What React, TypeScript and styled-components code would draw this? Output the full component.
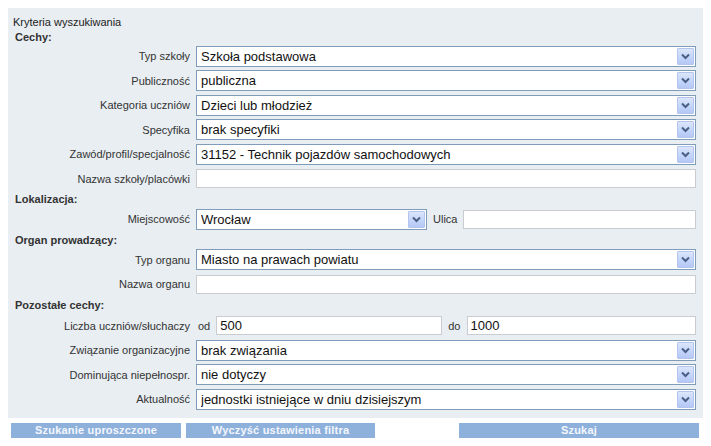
import React from 'react';
import styled, { createGlobalStyle } from 'styled-components';

const GlobalStyle = createGlobalStyle`
  html, body {
    margin: 0;
    padding: 0;
    background: #fff;
  }
  body {
    font-family: 'Liberation Sans', Arial, sans-serif;
    font-size: 11px;
    color: #222;
  }
`;

const Page = styled.div`
  padding: 8px 8px 0 8px;
  width: 695px;
`;

const Panel = styled.div`
  background: #e8eef2;
  padding: 6px 7px 6px 0;
`;

const Title = styled.div`
  padding-left: 5px;
  height: 16px;
  line-height: 16px;
`;

const Heading = styled.div<{ $h?: number }>`
  padding-left: 7px;
  height: ${p => p.$h ?? 16}px;
  line-height: ${p => p.$h ?? 16}px;
  font-weight: bold;
  color: #333;
`;

const Row = styled.div`
  display: grid;
  grid-template-columns: 182px 1fr;
  column-gap: 6px;
  align-items: center;
  height: 24.5px;
`;

const Label = styled.div`
  text-align: right;
  color: #333;
  white-space: nowrap;
`;

const Controls = styled.div`
  display: flex;
  align-items: center;
  gap: 6px;
  min-width: 0;
`;

const SelectBox = styled.div<{ $width?: number }>`
  display: flex;
  align-items: center;
  box-sizing: border-box;
  height: 21px;
  ${p => (p.$width ? `width: ${p.$width}px; flex: none;` : 'flex: 1;')}
  background: #fff;
  border: 1px solid #7f9db9;
  padding: 0 1px 0 4px;
  font-size: 13px;
  color: #111;
`;

const SelectText = styled.span`
  flex: 1;
  white-space: nowrap;
  overflow: hidden;
`;

const ArrowButton = styled.span`
  display: flex;
  align-items: center;
  justify-content: center;
  box-sizing: border-box;
  width: 17px;
  height: 17px;
  background: linear-gradient(180deg, #dce6fb 0%, #c4d5fa 55%, #b5c8f5 100%);
  border: 1px solid #b3c5ef;
  border-radius: 1px;
`;

const TextInput = styled.input<{ $width?: number }>`
  box-sizing: border-box;
  height: 19px;
  ${p => (p.$width ? `width: ${p.$width}px; flex: none;` : 'flex: 1; min-width: 0;')}
  border: 1px solid #c9cdd1;
  background: #fff;
  padding: 0 3px;
  font-family: 'Liberation Sans', Arial, sans-serif;
  font-size: 13px;
  color: #111;
  outline: none;
`;

const InlineLabel = styled.span`
  color: #333;
  white-space: nowrap;
`;

const ButtonBar = styled.div`
  display: flex;
  margin-top: 5px;
  padding-left: 3px;
`;

const Button = styled.button<{ $width: number; $gap?: number }>`
  width: ${p => p.$width}px;
  margin-left: ${p => p.$gap ?? 0}px;
  height: 15px;
  padding: 0;
  border: none;
  background: #8eb1dc;
  color: #f4f7fc;
  font-family: 'Liberation Sans', Arial, sans-serif;
  font-weight: bold;
  font-size: 11px;
  line-height: 15px;
  letter-spacing: 0.2px;
  cursor: pointer;
`;

function Chevron() {
  return (
    <svg width="9" height="7" viewBox="0 0 9 7">
      <path d="M1 1.5 L4.5 5 L8 1.5" fill="none" stroke="#4a5f86" strokeWidth="2" />
    </svg>
  );
}

function Select({ value, width }: { value: string; width?: number }) {
  return (
    <SelectBox $width={width}>
      <SelectText>{value}</SelectText>
      <ArrowButton>
        <Chevron />
      </ArrowButton>
    </SelectBox>
  );
}

function Field({ label, children }: { label: string; children: React.ReactNode }) {
  return (
    <Row>
      <Label>{label}</Label>
      <Controls>{children}</Controls>
    </Row>
  );
}

export default function App() {
  return (
    <Page>
      <GlobalStyle />
      <Panel>
        <Title>Kryteria wyszukiwania</Title>
        <Heading $h={14}>Cechy:</Heading>
        <Field label="Typ szkoły">
          <Select value="Szkoła podstawowa" />
        </Field>
        <Field label="Publiczność">
          <Select value="publiczna" />
        </Field>
        <Field label="Kategoria uczniów">
          <Select value="Dzieci lub młodzież" />
        </Field>
        <Field label="Specyfika">
          <Select value="brak specyfiki" />
        </Field>
        <Field label="Zawód/profil/specjalność">
          <Select value="31152 - Technik pojazdów samochodowych" />
        </Field>
        <Field label="Nazwa szkoły/placówki">
          <TextInput defaultValue="" />
        </Field>

        <Heading>Lokalizacja:</Heading>
        <Field label="Miejscowość">
          <Select value="Wrocław" width={231} />
          <InlineLabel>Ulica</InlineLabel>
          <TextInput defaultValue="" />
        </Field>

        <Heading>Organ prowadzący:</Heading>
        <Field label="Typ organu">
          <Select value="Miasto na prawach powiatu" />
        </Field>
        <Field label="Nazwa organu">
          <TextInput defaultValue="" />
        </Field>

        <Heading $h={17}>Pozostałe cechy:</Heading>
        <Field label="Liczba uczniów/słuchaczy">
          <InlineLabel style={{ marginLeft: 2 }}>od</InlineLabel>
          <TextInput defaultValue="500" $width={226} />
          <InlineLabel>do</InlineLabel>
          <TextInput defaultValue="1000" />
        </Field>
        <Field label="Związanie organizacyjne">
          <Select value="brak związania" />
        </Field>
        <Field label="Dominująca niepełnospr.">
          <Select value="nie dotyczy" />
        </Field>
        <Field label="Aktualność">
          <Select value="jednostki istniejące w dniu dzisiejszym" />
        </Field>
      </Panel>
      <ButtonBar>
        <Button $width={170}>Szukanie uproszczone</Button>
        <Button $width={189} $gap={5}>Wyczyść ustawienia filtra</Button>
        <Button $width={240} $gap={84}>Szukaj</Button>
      </ButtonBar>
    </Page>
  );
}
